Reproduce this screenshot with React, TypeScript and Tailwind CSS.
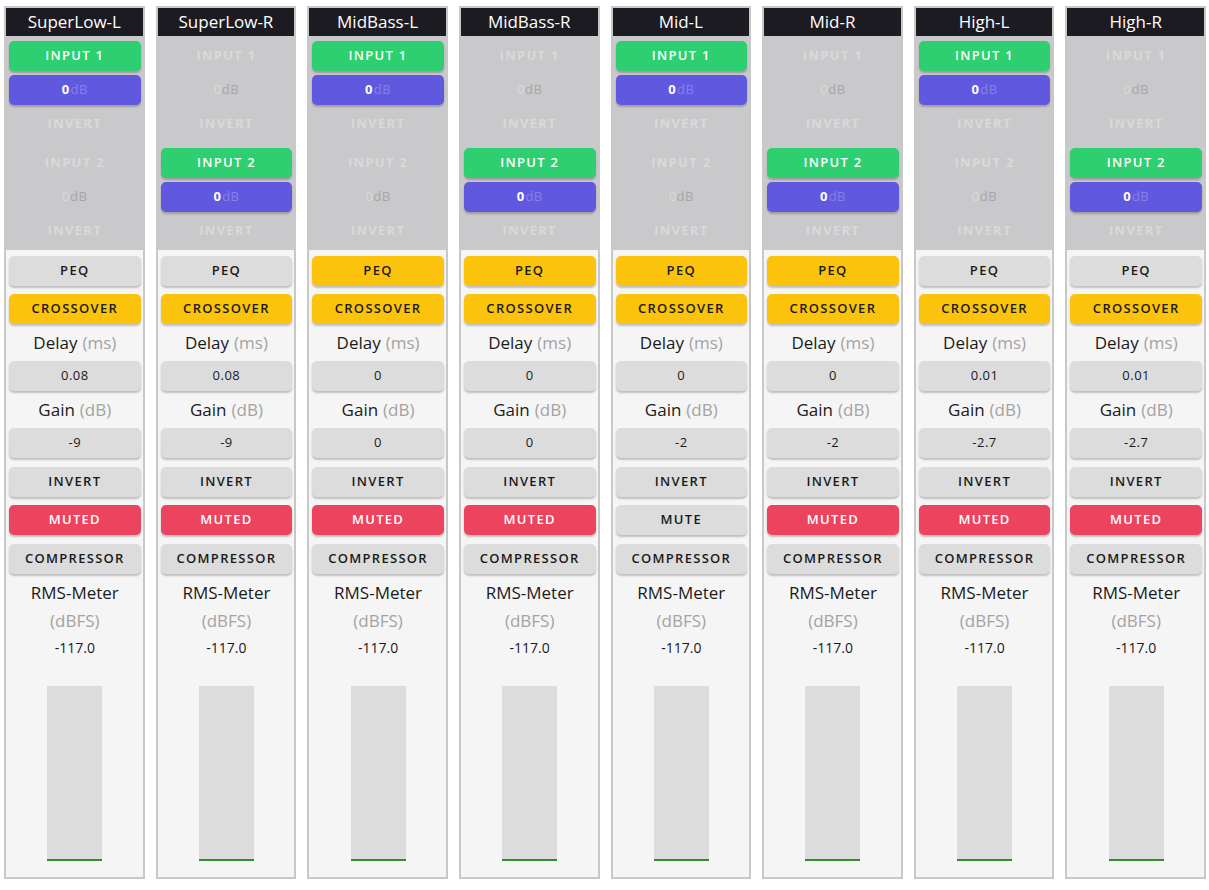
import type { ReactNode } from 'react'

type Channel = {
  name: string
  input: 1 | 2
  peq: boolean
  crossover: boolean
  delay: string
  gain: string
  muted: boolean
}

const channels: Channel[] = [
  { name: 'SuperLow-L', input: 1, peq: false, crossover: true, delay: '0.08', gain: '-9', muted: true },
  { name: 'SuperLow-R', input: 2, peq: false, crossover: true, delay: '0.08', gain: '-9', muted: true },
  { name: 'MidBass-L', input: 1, peq: true, crossover: true, delay: '0', gain: '0', muted: true },
  { name: 'MidBass-R', input: 2, peq: true, crossover: true, delay: '0', gain: '0', muted: true },
  { name: 'Mid-L', input: 1, peq: true, crossover: true, delay: '0', gain: '-2', muted: false },
  { name: 'Mid-R', input: 2, peq: true, crossover: true, delay: '0', gain: '-2', muted: true },
  { name: 'High-L', input: 1, peq: false, crossover: true, delay: '0.01', gain: '-2.7', muted: true },
  { name: 'High-R', input: 2, peq: false, crossover: true, delay: '0.01', gain: '-2.7', muted: true },
]

type Tone = 'gray' | 'green' | 'purple' | 'yellow' | 'red'

const tones: Record<Tone, string> = {
  gray: 'bg-[#dcdcdc] text-[#1a1a1a]',
  green: 'bg-[#2ecf71] text-white',
  purple: 'bg-[#6158e0] text-white',
  yellow: 'bg-[#fcc30c] text-[#1a1a1a]',
  red: 'bg-[#ec445e] text-white',
}

const Btn = ({ tone, value, children, className = '' }: { tone: Tone; value?: boolean; children: ReactNode; className?: string }) => (
  <div
    className={`flex h-[30px] items-center justify-center rounded-[5px] text-[13px] shadow-[0_2px_2px_rgba(0,0,0,0.22)] ${
      value ? 'font-medium tracking-[0.5px]' : 'font-semibold tracking-[1.3px]'
    } ${tones[tone]} ${className}`}
  >
    {children}
  </div>
)

const Faded = ({ children }: { children: ReactNode }) => (
  <div className="flex h-[30px] items-center justify-center text-[13px] font-bold tracking-[1.3px] text-[#d9d9da]">{children}</div>
)

const InputGroup = ({ label, active, className = '' }: { label: string; active: boolean; className?: string }) => (
  <div className={`flex flex-col gap-[4px] ${className}`}>
    {active ? (
      <>
        <Btn tone="green">{label}</Btn>
        <Btn tone="purple">
          <span className="font-bold text-white">0</span>
          <span className="font-normal tracking-[0.5px] text-[#8680e6]">dB</span>
        </Btn>
      </>
    ) : (
      <>
        <Faded>{label}</Faded>
        <div className="flex h-[30px] items-center justify-center text-[13px] tracking-[0.5px]">
          <span className="text-[#d9d9da]">0</span>
          <span className="text-[#a6a6a8]">dB</span>
        </div>
      </>
    )}
    <Faded>INVERT</Faded>
  </div>
)

const Label = ({ main, unit }: { main: string; unit: string }) => (
  <div className="flex h-[37px] items-center justify-center text-[17px] text-[#1a1a1a]">
    {main}
    <span className="ml-[5px] text-[#a3a3a3]">{unit}</span>
  </div>
)

const Strip = ({ ch }: { ch: Channel }) => (
  <div className="flex h-[873px] flex-col border-2 border-[#c8c8c8] bg-[#f5f5f6]">
    <div className="flex h-[28px] items-center justify-center bg-[#1c1b22] text-[17px] font-medium text-white">{ch.name}</div>
    <div className="flex flex-col bg-[#c9c9cb] pb-[4px] pl-[3px] pr-[2px] pt-[5px]">
      <InputGroup label="INPUT 1" active={ch.input === 1} />
      <InputGroup label="INPUT 2" active={ch.input === 2} className="mt-[9px]" />
    </div>
    <div className="flex flex-1 flex-col pl-[3px] pr-[2px] pt-[6px]">
      <Btn tone={ch.peq ? 'yellow' : 'gray'}>PEQ</Btn>
      <Btn tone={ch.crossover ? 'yellow' : 'gray'} className="mt-[8px]">
        CROSSOVER
      </Btn>
      <Label main="Delay" unit="(ms)" />
      <Btn tone="gray" value>
        {ch.delay}
      </Btn>
      <Label main="Gain" unit="(dB)" />
      <Btn tone="gray" value>
        {ch.gain}
      </Btn>
      <Btn tone="gray" className="mt-[9px]">
        INVERT
      </Btn>
      <Btn tone={ch.muted ? 'red' : 'gray'} className="mt-[8px]">
        {ch.muted ? 'MUTED' : 'MUTE'}
      </Btn>
      <Btn tone="gray" className="mt-[9px]">
        COMPRESSOR
      </Btn>
      <div className="flex h-[38px] items-center justify-center text-[17px] text-[#1a1a1a]">RMS-Meter</div>
      <div className="flex h-[18px] items-center justify-center text-[17px] text-[#a3a3a3]">(dBFS)</div>
      <div className="mt-[7px] flex h-[20px] items-center justify-center text-[14px] text-[#1a1a1a]">-117.0</div>
      <div className="mt-[29px] flex justify-center">
        <div className="flex h-[175px] w-[55px] flex-col justify-end bg-[#dcdcdc]">
          <div className="h-[2px] bg-[#2f8f2f]" />
        </div>
      </div>
    </div>
  </div>
)

const App = () => (
  <div className="min-h-screen bg-white pl-[4px] pr-[3px] pt-[6px]" style={{ fontFamily: '"Open Sans", "Noto Sans", sans-serif' }}>
    <div className="grid grid-cols-8 gap-[11px]">
      {channels.map((ch) => (
        <Strip key={ch.name} ch={ch} />
      ))}
    </div>
  </div>
)

export default App
